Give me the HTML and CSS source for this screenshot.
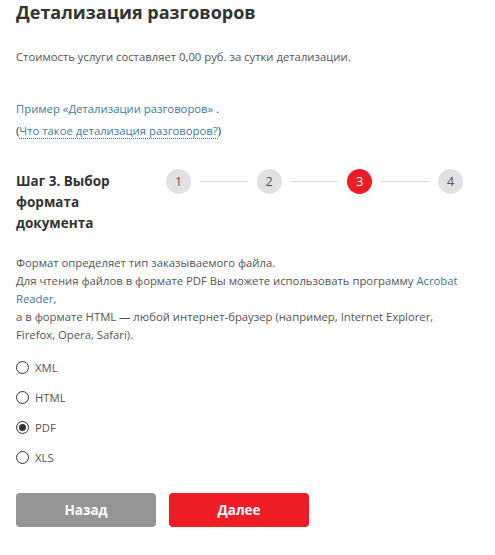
FILE: index.html
```html
<!DOCTYPE html>
<html lang="ru">
<head>
    <meta charset="UTF-8">
    <title>Детализация разговоров</title>
    <link rel="stylesheet" href="styles.css">
</head>
<body>

<div class="page">
    <h1>Детализация разговоров</h1>

    <p class="price">Стоимость услуги составляет 0,00 руб. за сутки детализации.</p>

    <div class="links">
        <div><a href="#" class="link">Пример «Детализации разговоров»</a> .</div>
        <div>(<a href="#" class="link dotted">Что такое детализация разговоров?</a>)</div>
    </div>

    <div class="step-row">
        <div class="step-title">Шаг 3. Выбор формата документа</div>
        <div class="steps">
            <span class="step">1</span>
            <span class="step-line"></span>
            <span class="step">2</span>
            <span class="step-line"></span>
            <span class="step active">3</span>
            <span class="step-line"></span>
            <span class="step">4</span>
        </div>
    </div>

    <p class="info">
        Формат определяет тип заказываемого файла.<br>
        Для чтения файлов в формате PDF Вы можете использовать программу <a href="#" class="link">Acrobat</a>
        <a href="#" class="link">Reader</a>,<br>
        а в формате HTML — любой интернет-браузер (например, Internet Explorer, Firefox, Opera, Safari).
    </p>

    <div class="formats">
        <label class="radio"><input type="radio" name="fmt"><span class="dot"></span>XML</label>
        <label class="radio"><input type="radio" name="fmt"><span class="dot"></span>HTML</label>
        <label class="radio"><input type="radio" name="fmt" checked><span class="dot"></span>PDF</label>
        <label class="radio"><input type="radio" name="fmt"><span class="dot"></span>XLS</label>
    </div>

    <div class="buttons">
        <button class="btn back">Назад</button>
        <button class="btn next">Далее</button>
    </div>
</div>

</body>
</html>
```

FILE: styles.css
```css
/* Global Styles */
body {
    font-family: 'Open Sans', 'Noto Sans', sans-serif;
    margin: 0;
    padding: 0;
    background-color: #fff;
    color: #555;
}

.page {
    padding: 0 22px 0 16px;
}

h1 {
    margin: 0;
    padding-top: 1px;
    font-size: 18px;
    line-height: 22px;
    font-weight: 700;
    color: #333;
}

.price {
    margin: 25px 0 0;
    font-size: 11.3px;
    line-height: 18px;
}

.links {
    margin-top: 32px;
    font-size: 11.3px;
    line-height: 22px;
    color: #333;
}

.link {
    color: #3a7ca5;
    text-decoration: none;
}

.dotted {
    border-bottom: 1px dotted #3a7ca5;
}

/* Steps */
.step-row {
    display: flex;
    margin-top: 29px;
}

.step-title {
    width: 140px;
    font-size: 13.5px;
    line-height: 21px;
    font-weight: 700;
    color: #333;
}

.steps {
    flex: 1;
    display: flex;
    align-items: center;
    height: 21px;
    padding-left: 10px;
    margin-right: 10px;
}

.step {
    width: 25px;
    height: 25px;
    border-radius: 50%;
    background-color: #e1e1e1;
    color: #555;
    font-size: 12.5px;
    line-height: 25px;
    text-align: center;
    flex: none;
}

.step.active {
    background-color: #ee1c25;
    color: #fff;
}

.step-line {
    flex: 1;
    height: 1px;
    background-color: #ddd;
    margin: 0 9px;
}

/* Info */
.info {
    margin: 20px 0 0;
    font-size: 11.3px;
    line-height: 18px;
}

/* Radios */
.formats {
    margin-top: 8px;
}

.radio {
    display: flex;
    align-items: center;
    height: 30px;
    font-size: 11.3px;
    color: #555;
    cursor: pointer;
}

.radio input {
    display: none;
}

.dot {
    width: 11px;
    height: 11px;
    border: 1px solid #333;
    border-radius: 50%;
    margin-right: 6px;
    position: relative;
}

.radio input:checked + .dot::after {
    content: "";
    position: absolute;
    left: 2px;
    top: 2px;
    width: 7px;
    height: 7px;
    border-radius: 50%;
    background-color: #333;
}

/* Buttons */
.buttons {
    display: flex;
    gap: 13px;
    margin-top: 21px;
}

.btn {
    width: 140px;
    height: 34px;
    border: none;
    border-radius: 4px;
    color: #fff;
    font-family: 'Open Sans', sans-serif;
    font-size: 13.5px;
    font-weight: 700;
    cursor: pointer;
}

.back {
    background-color: #959595;
}

.next {
    background-color: #ee1c25;
}
```
